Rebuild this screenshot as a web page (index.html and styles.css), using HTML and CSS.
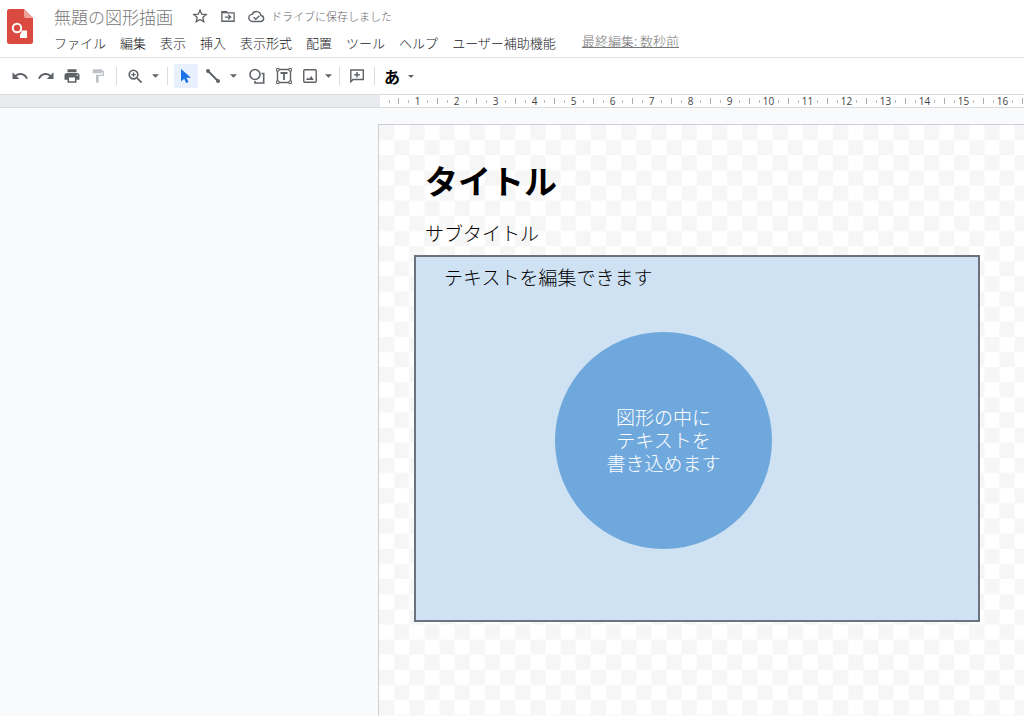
FILE: index.html
```html
<!DOCTYPE html>
<html lang="ja">
<head>
<meta charset="utf-8">
<meta name="viewport" content="width=device-width, initial-scale=1">
<title>無題の図形描画</title>
<link rel="stylesheet" href="styles.css">
</head>
<body>
<header class="header">
  <a class="logo" href="#" aria-label="図形描画ホーム">
    <svg width="26" height="36" viewBox="0 0 26 36">
      <path fill="#db4a41" d="M3 0h14l9 9v23.500a2.500 2.500 0 0 1-2.500 2.500h-21A2.500 2.500 0 0 1 0 32.500V2.500A2.500 2.500 0 0 1 2.500 0z"/>
      <path fill="#f0a29c" d="M17 0l9 9h-7a2 2 0 0 1-2-2z"/>
      <circle cx="10" cy="19" r="4.200" fill="none" stroke="#fff" stroke-width="2"/>
      <path fill="#fff" d="M14.500 21.500H20V29h-7v-3.500a6 6 0 0 0 1.500-4z"/>
    </svg>
  </a>
  <div class="header-main">
    <div class="title-row">
      <input class="doc-title" type="text" value="無題の図形描画" aria-label="名前を変更">
      <button class="title-icon" aria-label="スター"><svg width="16" height="16" viewBox="0 0 24 24"><path fill="none" stroke="#5f6368" stroke-width="2" d="M12 3.200l2.600 6.100 6.600.6-5 4.400 1.500 6.500-5.700-3.500-5.700 3.500 1.500-6.500-5-4.400 6.600-.6z"/></svg></button>
      <button class="title-icon" aria-label="移動"><svg width="16" height="14" viewBox="0 0 18 16"><path fill="none" stroke="#5f6368" stroke-width="1.500" d="M2 3h5l1.500 1.500H16V14H2z"/><path fill="none" stroke="#5f6368" stroke-width="1.500" d="M2 4h6M5.500 9.200h6M9.300 6.500L12 9.200l-2.700 2.700"/></svg></button>
      <button class="save-state"><svg width="17" height="13" viewBox="0 0 24 18"><path fill="none" stroke="#5f6368" stroke-width="2" d="M6.500 16a5 5 0 0 1-.6-10A6.500 6.500 0 0 1 18.300 7.500 4.300 4.300 0 0 1 18.500 16z"/><path fill="none" stroke="#5f6368" stroke-width="2" d="M8 10l3 3 5-5"/></svg><span>ドライブに保存しました</span></button>
    </div>
    <nav class="menu">
      <button>ファイル</button>
      <button>編集</button>
      <button>表示</button>
      <button>挿入</button>
      <button>表示形式</button>
      <button>配置</button>
      <button>ツール</button>
      <button>ヘルプ</button>
      <button>ユーザー補助機能</button>
      <a class="last-edit" href="#">最終編集: 数秒前</a>
    </nav>
  </div>
</header>

<div class="toolbar" role="toolbar">
  <button class="tool" aria-label="元に戻す"><svg width="18" height="18" viewBox="0 0 24 24"><path d="M12.500 8c-2.650 0-5.050.99-6.900 2.600L2 7v9h9l-3.620-3.620c1.390-1.160 3.160-1.880 5.120-1.880 3.540 0 6.550 2.310 7.600 5.500l2.370-.78C21.080 11.030 17.150 8 12.500 8z"/></svg></button>
  <button class="tool" aria-label="やり直し"><svg width="18" height="18" viewBox="0 0 24 24"><path d="M18.400 10.600C16.550 8.990 14.150 8 11.500 8c-4.650 0-8.580 3.030-9.960 7.220L3.900 16c1.050-3.190 4.050-5.500 7.600-5.500 1.950 0 3.730.72 5.120 1.880L13 16h9V7l-3.600 3.600z"/></svg></button>
  <button class="tool" aria-label="印刷"><svg width="18" height="18" viewBox="0 0 24 24"><path d="M19 8H5c-1.660 0-3 1.340-3 3v6h4v4h12v-4h4v-6c0-1.660-1.340-3-3-3zm-3 11H8v-5h8v5zm3-7c-.55 0-1-.45-1-1s.45-1 1-1 1 .45 1 1-.45 1-1 1zm-1-9H6v4h12V3z"/></svg></button>
  <button class="tool faded" aria-label="書式を貼り付け"><svg width="16" height="16" viewBox="0 0 24 24"><path d="M18 4V3c0-.55-.45-1-1-1H5c-.55 0-1 .45-1 1v4c0 .55.45 1 1 1h12c.55 0 1-.45 1-1V6h1v4H9v11c0 .55.45 1 1 1h2c.55 0 1-.45 1-1v-9h8V4h-3z"/></svg></button>
  <span class="separator"></span>
  <button class="tool" aria-label="ズーム"><svg width="19" height="19" viewBox="0 0 24 24"><path d="M15.500 14h-.79l-.28-.27A6.470 6.470 0 0 0 16 9.500 6.500 6.500 0 1 0 9.500 16c1.610 0 3.090-.59 4.230-1.570l.27.28v.79l5 4.990L20.490 19l-4.990-5zm-6 0C7.010 14 5 11.990 5 9.500S7.010 5 9.500 5 14 7.010 14 9.500 11.990 14 9.500 14zM10.300 6.800H8.700v1.900H6.800v1.600h1.900v1.900h1.600v-1.900h1.900V8.700h-1.900z"/></svg></button>
  <button class="arrow" aria-label="ズームのオプション"><svg width="7" height="4" viewBox="0 0 8 4"><path d="M0 0h8L4 4z"/></svg></button>
  <span class="separator"></span>
  <button class="tool selected" aria-label="選択" aria-pressed="true"><svg width="12" height="16" viewBox="0 0 12 16"><path d="M1 1v12.500l3.200-2.800 2 4.300 2.300-1-2-4.200H11z"/></svg></button>
  <button class="tool" aria-label="線"><svg width="16" height="16" viewBox="0 0 16 16"><path fill="none" stroke="#5f6368" stroke-width="2" d="M3 3l10 10"/><circle cx="3" cy="3" r="2"/><circle cx="13" cy="13" r="2"/></svg></button>
  <button class="arrow after-line" aria-label="線の種類"><svg width="7" height="4" viewBox="0 0 8 4"><path d="M0 0h8L4 4z"/></svg></button>
  <button class="tool" aria-label="図形"><svg width="18" height="18" viewBox="0 0 18 18"><circle cx="7" cy="7.500" r="5" fill="none" stroke="#5f6368" stroke-width="1.600"/><path fill="none" stroke="#5f6368" stroke-width="1.600" d="M13.500 6.500h2.200V16H7v-2"/></svg></button>
  <button class="tool wide" aria-label="テキストボックス"><svg width="18" height="18" viewBox="0 0 18 18"><path fill="none" stroke="#5f6368" stroke-width="1.400" d="M2.500 2.500h13v13h-13z"/><path fill="#fff" stroke="#5f6368" d="M1.500 1.500h2.500V4H1.500zM14 1.500h2.500V4H14zM1.500 14h2.500v2.500H1.500zM14 14h2.500v2.500H14z"/><path fill="none" stroke="#5f6368" stroke-width="1.800" d="M5.500 6h7M9 6v7"/></svg></button>
  <button class="tool medium" aria-label="画像"><svg width="14" height="14" viewBox="0 0 14 14"><rect x=".75" y=".75" width="12.500" height="12.500" rx="1" fill="none" stroke="#5f6368" stroke-width="1.400"/><path d="M3 11l1.700-2.600L6 10l2.200-3 2.600 4z"/></svg></button>
  <button class="arrow slim" aria-label="画像のオプション"><svg width="7" height="4" viewBox="0 0 8 4"><path d="M0 0h8L4 4z"/></svg></button>
  <span class="separator"></span>
  <button class="tool medium" aria-label="コメントを追加"><svg width="14" height="14" viewBox="0 0 14 14"><path fill="none" stroke="#5f6368" stroke-width="1.400" d="M.8 12.800V1h12.500v9.500H3z"/><path fill="none" stroke="#5f6368" stroke-width="1.500" d="M7 3v5.500M4.200 5.700h5.600"/></svg></button>
  <span class="separator"></span>
  <button class="tool medium ime" aria-label="入力ツール">あ</button>
  <button class="arrow" aria-label="入力ツールのオプション"><svg width="6" height="3" viewBox="0 0 8 4"><path d="M0 0h8L4 4z"/></svg></button>
</div>

<main class="editor">
  <div class="ruler">
    <div class="scale">
      <i class="scale-start"></i>
      <span>1</span><span>2</span><span>3</span><span>4</span><span>5</span><span>6</span><span>7</span><span>8</span><span>9</span><span>10</span><span>11</span><span>12</span><span>13</span><span>14</span><span>15</span><span>16</span><span></span>
    </div>
  </div>
  <section class="page">
    <svg class="checker" width="100%" height="100%" aria-hidden="true">
      <defs>
        <pattern id="squares" width="30" height="30" patternUnits="userSpaceOnUse" patternTransform="scale(1.009)">
          <path fill="#f6f6f6" d="M0 0h15v15H0zM15 15h15v15H15z"/>
        </pattern>
      </defs>
      <rect width="100%" height="100%" fill="url(#squares)"/>
    </svg>
    <h1 class="shape heading">タイトル</h1>
    <p class="shape subheading">サブタイトル</p>
    <div class="shape panel">テキストを編集できます</div>
    <div class="shape circle"><p>図形の中に<br>テキストを<br>書き込めます</p></div>
  </section>
</main>
</body>
</html>
```
FILE: styles.css
```css
* {
  box-sizing: border-box;
}

body {
  margin: 0;
  height: 100vh;
  display: flex;
  flex-direction: column;
  overflow: hidden;
  background: #fff;
  color: #202124;
  font-family: "Noto Sans CJK JP", sans-serif;
  font-weight: 300;
}

button,
input {
  margin: 0;
  padding: 0;
  border: 0;
  background: none;
  color: inherit;
  font: inherit;
}

svg {
  display: block;
}

.header {
  display: flex;
  gap: 21px;
  padding: 4px 7px 4px;
  border-bottom: 1px solid #dfe1e5;
}

.logo {
  padding-top: 5px;
}

.header-main {
  flex: 1;
  min-width: 0;
}

.title-row {
  display: flex;
  align-items: center;
  height: 24px;
}

.doc-title {
  width: 132px;
  height: 24px;
  color: #777;
  font-size: 17px;
}

.title-icon {
  width: 28px;
  display: flex;
  justify-content: center;
}

.save-state {
  display: flex;
  align-items: center;
  gap: 6px;
  margin-left: 6px;
  color: #5f6368;
  font-size: 11px;
  line-height: 20px;
  white-space: nowrap;
}

.menu {
  display: flex;
  gap: 14px;
  height: 25px;
  font-size: 13px;
  line-height: 30px;
  white-space: nowrap;
}

.menu button {
  line-height: 30px;
}

.last-edit {
  margin-left: 12px;
  color: #777;
  line-height: 25px;
}

.toolbar {
  display: flex;
  align-items: center;
  height: 36px;
  padding-left: 7px;
}

.tool,
.arrow {
  display: flex;
  align-items: center;
  justify-content: center;
  flex: none;
  width: 26px;
  height: 24px;
  fill: #5f6368;
}

.arrow {
  width: 14px;
}

.slim {
  width: 12px;
}

.medium {
  width: 24px;
}

.wide {
  width: 28px;
}

.faded {
  fill: #bdc1c6;
}

.selected {
  width: 24px;
  margin: 0 2px 0 1px;
  border-radius: 2px;
  background: #e8f0fe;
  fill: #1a73e8;
}

.after-line {
  margin-right: 4px;
}

.ime {
  color: #000;
  font-size: 16px;
  font-weight: 700;
  line-height: 24px;
}

.separator {
  width: 1px;
  height: 18px;
  margin: 0 5px;
  background: #dadce0;
}

.editor {
  flex: 1;
  min-height: 0;
  display: flex;
  flex-direction: column;
  gap: 16px;
  background: #f8fafc;
}

.ruler {
  padding-left: 380px;
  border: solid #d9dbdf;
  border-width: 1px 0;
  background: #e8eaed;
}

.scale {
  display: flex;
  height: 12px;
  overflow: hidden;
  background: #fff;
  color: #444;
  font: 10px/12px "Open Sans", sans-serif;
}

.scale-start {
  flex: none;
  width: 18px;
  background: linear-gradient(#bbb, #bbb) 9px 5px / 1px 3px no-repeat;
}

.scale span {
  flex: none;
  width: 39px;
  text-align: center;
  background:
    linear-gradient(#aaa, #aaa) 0 3px / 1px 6px no-repeat,
    linear-gradient(#bbb, #bbb) 10px 5px / 1px 3px no-repeat,
    linear-gradient(#bbb, #bbb) 29px 5px / 1px 3px no-repeat;
}

/* Drawing page: shapes sit at free coordinates. */
.page {
  position: relative;
  flex: 1;
  margin-left: 378px;
  overflow: hidden;
  border: solid #cdd0d4;
  border-width: 1px 0 0 1px;
  background: #fff;
  color: #000;
  font-size: 19px;
}

.shape {
  position: absolute;
  margin: 0;
  white-space: nowrap;
}

.heading {
  left: 46px;
  top: 31px;
  font-size: 33px;
  line-height: 48px;
}

.subheading {
  left: 46px;
  top: 94px;
  line-height: 28px;
}

.panel {
  left: 35px;
  top: 130px;
  width: 566px;
  height: 367px;
  padding: 6px 28px;
  border: 2px solid #6b747c;
  background: #cfe2f3;
  line-height: 28px;
}

.circle {
  left: 176px;
  top: 207px;
  width: 217px;
  height: 217px;
  display: grid;
  place-content: center;
  border-radius: 50%;
  background: #6fa8dc;
  color: #fff;
  line-height: 23px;
  text-align: center;
}

.circle p {
  margin: 0 0 2px;
}
```
